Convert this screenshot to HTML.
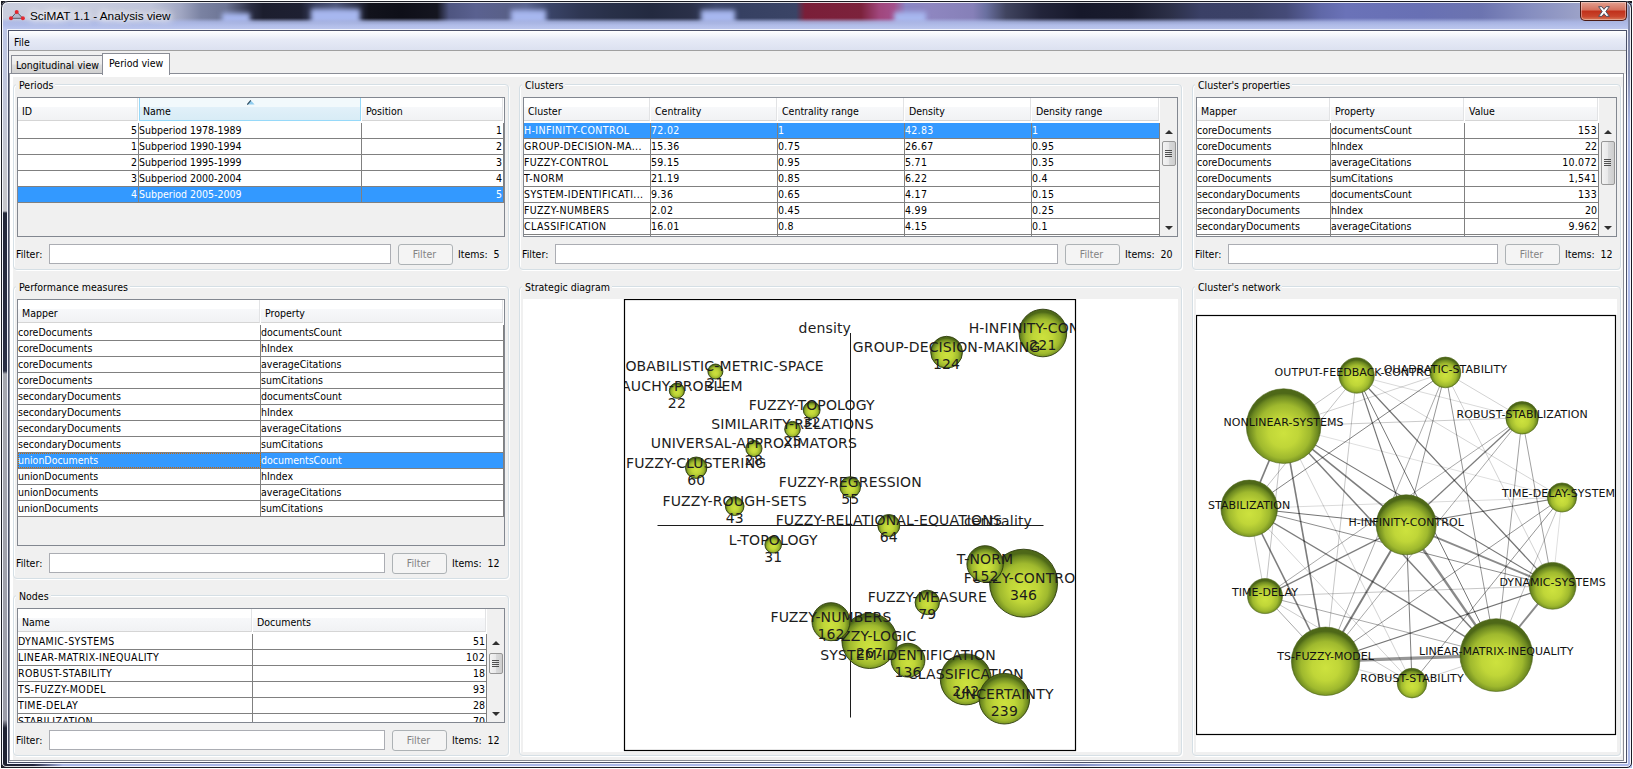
<!DOCTYPE html>
<html lang="en"><head><meta charset="utf-8"><title>SciMAT 1.1 - Analysis view</title>
<style>
html,body{margin:0;padding:0}
body{width:1633px;height:769px;position:relative;overflow:hidden;background:#fff;
 font-family:"DejaVu Sans Condensed","Liberation Sans",sans-serif;font-size:10.5px;color:#000;cursor:default}
div,span{box-sizing:border-box}
.a{position:absolute}
.t{position:absolute;white-space:nowrap;line-height:14px;height:14px}
#client{background:#f0f0f0;overflow:hidden}
#menubar{background:linear-gradient(#fff 0,#f4f6fb 4px,#e6eaf6 9px,#dce1f0 100%);border-bottom:1px solid #a0a0a0}
.tab{position:absolute;border:1px solid #898c95;border-bottom:0;white-space:nowrap;line-height:14px}
.tab.off{background:linear-gradient(#f2f2f2 0,#ebebeb 8px,#dddddd 9px,#cfcfcf 100%)}
.tab.on{background:#fff}
#tabc{border:1px solid #898c95;background:#f0f0f0}
.grp{position:absolute;border:1px solid #d5dfe5;border-radius:4px;box-shadow:1px 1px 0 #fff,inset 1px 1px 0 #fff}
.gt{position:absolute;top:-7px;left:2px;height:14px;line-height:14px;padding:0 2px 0 3px;background:#f0f0f0;white-space:nowrap}
.tbl{position:absolute;border:1px solid #828790;background:#f0f0f0;overflow:hidden}
.hd{position:absolute;left:0;top:0;height:25px;background:#fff}
.hc{position:absolute;top:0;height:23px;border-right:1px solid #e2e3e5;border-bottom:1px solid #d5d5d5;
 background:linear-gradient(#fff 0,#fff 9px,#f7f8fa 9px,#f1f2f4 22px);line-height:14px;padding:6px 0 0 4px;white-space:nowrap;overflow:hidden}
.hc.s{border:1px solid #96d9f9;border-top:0;background:linear-gradient(#f2f9fc 0,#f2f9fc 9px,#e1f0f9 9px,#d8ecf6 22px);padding-left:3px}
.rw{position:absolute;left:0;height:16px;background:#fff;border-bottom:1px solid #808080;overflow:hidden}
.rw.sel{background:#3399ff;color:#fff}
.c{position:absolute;top:0;height:15px;line-height:15px;border-right:1px solid #808080;white-space:nowrap;overflow:hidden;padding:0 1px 0 0}
.c.r{text-align:right}
.c.u{letter-spacing:.4px}
.c.n{letter-spacing:.3px}
.tf{position:absolute;height:20px;background:#fff;border:1px solid #abadb3}
.btn{position:absolute;width:55px;height:21px;border:1px solid #adb2b5;border-radius:3px;background:#f4f4f4;color:#838383;text-align:center;line-height:18px;padding-right:2px}
.sb{position:absolute;background:#f0f0f0;width:17px}
.th{position:absolute;left:2px;width:14px;border:1px solid #979797;border-radius:2px;background:linear-gradient(90deg,#f3f3f3 0,#e8e8e9 49%,#d9dadb 50%,#cecece 100%)}
.gr{position:absolute;left:2px;width:7px;height:7px;background:repeating-linear-gradient(#4f4f4f 0,#4f4f4f 1px,transparent 1px,transparent 2px)}
.ar{position:absolute;left:5px;width:0;height:0;border-left:4px solid transparent;border-right:4px solid transparent}
.ar.u{border-bottom:4px solid #303030}
.ar.d{border-top:4px solid #303030}
svg text{font-family:"DejaVu Sans","Liberation Sans",sans-serif}
</style></head>
<body>
<div class="a" id="frame" style="left:1px;top:1px;width:1631px;height:767px;background:#17181e"></div>
<div class="a" id="glass" style="left:1px;top:1px;width:1631px;height:767px;background:#adbbeb;border-radius:7px 7px 6px 6px"></div>
<div class="a" id="titlebar" style="left:1px;top:1px;width:1631px;height:29px;border-radius:7px 7px 0 0;overflow:hidden;background:linear-gradient(90deg,#c9cddd 0px,#ccd0e0 60px,#bfc4da 150px,#a0a6c2 180px,#7a82a2 200px,#6c7494 225px,#2a2d42 250px,#1c1e2e 262px,#1e2032 300px,#3a4060 315px,#4a5276 335px,#2c3048 355px,#12131c 368px,#0e0f18 400px,#14151f 436px,#4e5580 448px,#5a6190 475px,#596088 505px,#5a6490 525px,#3a4468 548px,#2e3652 580px,#283048 610px,#232a40 650px,#2a3048 690px,#3a4468 715px,#364062 740px,#3a4466 795px,#7a1e38 804px,#7c223c 860px,#a0467c 878px,#a4508c 893px,#8a86c4 905px,#8e86c0 930px,#8680b8 972px,#6a70a0 985px,#40445f 1005px,#22243a 1040px,#16182a 1080px,#1a1c2e 1130px,#2c3048 1170px,#3a4066 1200px,#3c4268 1250px,#454b78 1285px,#6068a8 1320px,#6a72b8 1345px,#6870b4 1420px,#6c74b0 1480px,#868ec0 1530px,#9ca2c8 1580px,#a8aed0 1633px)"><div class="a" style="left:221px;top:12px;width:28px;height:11px;background:#a7b7ef;filter:blur(2.5px)"></div><div class="a" style="left:310px;top:8px;width:49px;height:15px;background:#a7b7ef;filter:blur(2.5px)"></div><div class="a" style="left:510px;top:9px;width:35px;height:14px;background:#a7b7ef;filter:blur(2.5px)"></div><div class="a" style="left:700px;top:9px;width:34px;height:14px;background:#a7b7ef;filter:blur(2.5px)"></div><div class="a" style="left:893px;top:11px;width:32px;height:12px;background:#a7b7ef;filter:blur(2.5px)"></div><div class="a" style="left:0;top:0;width:1631px;height:29px;background:linear-gradient(rgba(185,195,232,0) 0,rgba(185,195,232,0) 17px,rgba(172,184,230,.85) 21px,rgba(176,188,232,1) 24px,rgba(190,200,238,1) 100%)"></div></div>
<div class="a" style="left:3px;top:30px;width:4px;height:734px;background:linear-gradient(#bcc5e4 0,#c5c6cc 150px,#c5c6cc 181px,#23283a 183px,#2a2f44 341px,#a6a8b0 344px,#9a9ca8 690px,#1e2232 698px,#1e2232 100%)"></div>
<div class="a" style="left:1628px;top:30px;width:4px;height:734px;background:#acb9e8"></div>
<div class="a" style="left:3px;top:764px;width:1629px;height:4px;background:linear-gradient(90deg,#1e2232 0,#20243a 30px,#a9b6e6 60px,#adbaea 1000px,#7f8cc0 1075px,#98a6d8 1100px,#adbaea 1200px,#aebbeb 100%)"></div>
<div class="a" style="left:1628px;top:3px;width:4px;height:120px;background:linear-gradient(#7c84a4 0,#8890b0 70px,rgba(136,144,176,0) 100%)"></div>
<div class="a" style="left:1px;top:1px;width:1631px;height:767px;border:1px solid #1a1c24;border-radius:7px 7px 5px 5px;box-shadow:inset 0 0 0 1px rgba(255,255,255,.85)"></div>
<div class="a" style="left:7px;top:29px;width:1621px;height:735px;border:1px solid rgba(255,255,255,.8)"></div>
<div class="a" style="left:8px;top:30px;width:1619px;height:733px;border:1px solid #4a5068"></div>
<svg class="a" style="left:8px;top:9px" width="18" height="14" viewBox="0 0 18 14"><path d="M8.7 2.9 L3 9.3 L14.9 9.3 Z" fill="rgba(150,156,180,.45)" stroke="#4e4e5a" stroke-width=".9"/><circle cx="8.7" cy="2.9" r="2" fill="#e3262d"/><circle cx="3" cy="9.3" r="2" fill="#e3262d"/><circle cx="14.9" cy="9.3" r="2" fill="#e3262d"/></svg>
<div class="a" id="wtitle" style="left:30px;top:8px;height:16px;line-height:16px;font-family:'Liberation Sans',sans-serif;font-size:11.8px;white-space:nowrap;text-shadow:0 0 6px #fff,0 0 9px #fff,0 0 12px rgba(255,255,255,.9)">SciMAT 1.1 - Analysis view</div>
<div class="a" id="closebtn" style="left:1580px;top:2px;width:47px;height:19px;border:1px solid #4a1a14;border-top:0;border-radius:0 0 5px 5px;background:linear-gradient(#e3a090 0,#d4705c 45%,#c0301a 50%,#c8452c 80%,#d87a5a 100%);box-shadow:inset 0 0 0 1px rgba(255,255,255,.35)"><svg class="a" style="left:17px;top:4px" width="12" height="11" viewBox="0 0 11 10"><path d="M0.6 0.6 L3.6 0.6 L5.5 3 L7.4 0.6 L10.4 0.6 L7.2 5 L10.4 9.4 L7.4 9.4 L5.5 7 L3.6 9.4 L0.6 9.4 L3.8 5 Z" fill="#fff" stroke="#4a4f60" stroke-width="0.9" stroke-linejoin="round"/></svg></div>
<div id="client" class="a " style="left:9px;top:31px;width:1617px;height:731px;"><div id="menubar" class="a " style="left:0px;top:0px;width:1617px;height:20px;"><div class="t " style="left:5px;top:4px;">File</div></div>
<div class="a tab off" style="left:2px;top:24px;width:92px;height:19px;"><div class="t " style="left:4px;top:2px;">Longitudinal view</div></div>
<div id="tabc" class="a " style="left:0px;top:42px;width:1615px;height:688px;box-shadow:inset 0 3px 0 #fff,inset 3px 0 0 #fff,2px 1px 0 #fff"><div class="a tab on" style="left:92px;top:-21px;width:68px;height:22px;z-index:3"><div class="t " style="left:6px;top:2px;">Period view</div></div>
<div class="a grp" style="left:3px;top:10px;width:496px;height:186px;"><div class="gt">Periods</div><div class="a tbl" style="left:3px;top:12px;width:488px;height:140px;"><div class="hd" style="width:486px"><div class="hc" style="left:0px;width:120px">ID</div><div class="hc s" style="left:121px;width:222px">Name<svg class="a" style="left:107px;top:2px" width="8" height="5" viewBox="0 0 8 5"><path d="M0.3 4.6 L3.8 0.4 L7.6 4.6 Z" fill="#8fcdf0"/><path d="M0.3 4.6 L3.8 0.4" fill="none" stroke="#2c4a5e" stroke-width="1.1"/></svg></div><div class="hc" style="left:344px;width:141px">Position</div></div>
<div class="rw" style="top:25px;width:486px"><div class="c r" style="left:0px;width:121px;">5</div><div class="c" style="left:121px;width:223px;">Subperiod 1978-1989</div><div class="c r" style="left:344px;width:142px;">1</div></div>
<div class="rw" style="top:41px;width:486px"><div class="c r" style="left:0px;width:121px;">1</div><div class="c" style="left:121px;width:223px;">Subperiod 1990-1994</div><div class="c r" style="left:344px;width:142px;">2</div></div>
<div class="rw" style="top:57px;width:486px"><div class="c r" style="left:0px;width:121px;">2</div><div class="c" style="left:121px;width:223px;">Subperiod 1995-1999</div><div class="c r" style="left:344px;width:142px;">3</div></div>
<div class="rw" style="top:73px;width:486px"><div class="c r" style="left:0px;width:121px;">3</div><div class="c" style="left:121px;width:223px;">Subperiod 2000-2004</div><div class="c r" style="left:344px;width:142px;">4</div></div>
<div class="rw sel" style="top:89px;width:486px"><div class="c r" style="left:0px;width:121px;">4</div><div class="c" style="left:121px;width:223px;">Subperiod 2005-2009</div><div class="c r" style="left:344px;width:142px;">5</div></div>
</div>
<div class="t " style="left:2px;top:162px;">Filter:</div><div class="a tf" style="left:35px;top:159px;width:342px;height:20px;"></div>
<div class="btn" style="left:384px;top:159px">Filter</div><div class="t " style="left:444px;top:162px;">Items:  5</div></div>
<div class="a grp" style="left:3px;top:212px;width:496px;height:293px;"><div class="gt">Performance measures</div><div class="a tbl" style="left:3px;top:12px;width:488px;height:247px;"><div class="hd" style="width:486px"><div class="hc" style="left:0px;width:242px">Mapper</div><div class="hc" style="left:243px;width:242px">Property</div></div>
<div class="rw" style="top:25px;width:486px"><div class="c" style="left:0px;width:243px;">coreDocuments</div><div class="c" style="left:243px;width:243px;">documentsCount</div></div>
<div class="rw" style="top:41px;width:486px"><div class="c" style="left:0px;width:243px;">coreDocuments</div><div class="c" style="left:243px;width:243px;">hIndex</div></div>
<div class="rw" style="top:57px;width:486px"><div class="c" style="left:0px;width:243px;">coreDocuments</div><div class="c" style="left:243px;width:243px;">averageCitations</div></div>
<div class="rw" style="top:73px;width:486px"><div class="c" style="left:0px;width:243px;">coreDocuments</div><div class="c" style="left:243px;width:243px;">sumCitations</div></div>
<div class="rw" style="top:89px;width:486px"><div class="c" style="left:0px;width:243px;">secondaryDocuments</div><div class="c" style="left:243px;width:243px;">documentsCount</div></div>
<div class="rw" style="top:105px;width:486px"><div class="c" style="left:0px;width:243px;">secondaryDocuments</div><div class="c" style="left:243px;width:243px;">hIndex</div></div>
<div class="rw" style="top:121px;width:486px"><div class="c" style="left:0px;width:243px;">secondaryDocuments</div><div class="c" style="left:243px;width:243px;">averageCitations</div></div>
<div class="rw" style="top:137px;width:486px"><div class="c" style="left:0px;width:243px;">secondaryDocuments</div><div class="c" style="left:243px;width:243px;">sumCitations</div></div>
<div class="rw sel" style="top:153px;width:486px"><div class="c" style="left:0px;width:243px;outline:1px dotted #cc6600;outline-offset:-1px;">unionDocuments</div><div class="c" style="left:243px;width:243px;">documentsCount</div></div>
<div class="rw" style="top:169px;width:486px"><div class="c" style="left:0px;width:243px;">unionDocuments</div><div class="c" style="left:243px;width:243px;">hIndex</div></div>
<div class="rw" style="top:185px;width:486px"><div class="c" style="left:0px;width:243px;">unionDocuments</div><div class="c" style="left:243px;width:243px;">averageCitations</div></div>
<div class="rw" style="top:201px;width:486px"><div class="c" style="left:0px;width:243px;">unionDocuments</div><div class="c" style="left:243px;width:243px;">sumCitations</div></div>
</div>
<div class="t " style="left:2px;top:269px;">Filter:</div><div class="a tf" style="left:35px;top:266px;width:336px;height:20px;"></div>
<div class="btn" style="left:378px;top:266px">Filter</div><div class="t " style="left:438px;top:269px;">Items:  12</div></div>
<div class="a grp" style="left:3px;top:521px;width:496px;height:161px;"><div class="gt">Nodes</div><div class="a tbl" style="left:3px;top:12px;width:488px;height:115px;"><div class="hd" style="width:469px"><div class="hc" style="left:0px;width:234px">Name</div><div class="hc" style="left:235px;width:233px">Documents</div></div>
<div class="rw" style="top:25px;width:469px"><div class="c u" style="left:0px;width:235px;">DYNAMIC-SYSTEMS</div><div class="c r" style="left:235px;width:234px;">51</div></div>
<div class="rw" style="top:41px;width:469px"><div class="c u" style="left:0px;width:235px;">LINEAR-MATRIX-INEQUALITY</div><div class="c r n" style="left:235px;width:234px;">102</div></div>
<div class="rw" style="top:57px;width:469px"><div class="c u" style="left:0px;width:235px;">ROBUST-STABILITY</div><div class="c r" style="left:235px;width:234px;">18</div></div>
<div class="rw" style="top:73px;width:469px"><div class="c u" style="left:0px;width:235px;">TS-FUZZY-MODEL</div><div class="c r" style="left:235px;width:234px;">93</div></div>
<div class="rw" style="top:89px;width:469px"><div class="c u" style="left:0px;width:235px;">TIME-DELAY</div><div class="c r" style="left:235px;width:234px;">28</div></div>
<div class="rw" style="top:105px;width:469px"><div class="c u" style="left:0px;width:235px;">STABILIZATION</div><div class="c r" style="left:235px;width:234px;">70</div></div>
<div class="a sb" style="left:469px;top:25px;width:17px;height:88px;"><div class="ar u" style="top:7px"></div><div class="ar d" style="top:78px"></div><div class="th" style="top:19px;height:21px"><div class="gr" style="top:6px"></div></div></div>
</div>
<div class="t " style="left:2px;top:137px;">Filter:</div><div class="a tf" style="left:35px;top:134px;width:336px;height:20px;"></div>
<div class="btn" style="left:378px;top:134px">Filter</div><div class="t " style="left:438px;top:137px;">Items:  12</div></div>
<div class="a grp" style="left:509px;top:10px;width:663px;height:186px;"><div class="gt">Clusters</div><div class="a tbl" style="left:3px;top:12px;width:655px;height:140px;"><div class="hd" style="width:636px"><div class="hc" style="left:0px;width:126px">Cluster</div><div class="hc" style="left:127px;width:126px">Centrality</div><div class="hc" style="left:254px;width:126px">Centrality range</div><div class="hc" style="left:381px;width:126px">Density</div><div class="hc" style="left:508px;width:127px">Density range</div></div>
<div class="rw sel" style="top:25px;width:636px"><div class="c u" style="left:0px;width:127px;">H-INFINITY-CONTROL</div><div class="c n" style="left:127px;width:127px;">72.02</div><div class="c" style="left:254px;width:127px;">1</div><div class="c n" style="left:381px;width:127px;">42.83</div><div class="c" style="left:508px;width:128px;">1</div></div>
<div class="rw" style="top:41px;width:636px"><div class="c u" style="left:0px;width:127px;">GROUP-DECISION-MA...</div><div class="c n" style="left:127px;width:127px;">15.36</div><div class="c n" style="left:254px;width:127px;">0.75</div><div class="c n" style="left:381px;width:127px;">26.67</div><div class="c n" style="left:508px;width:128px;">0.95</div></div>
<div class="rw" style="top:57px;width:636px"><div class="c u" style="left:0px;width:127px;">FUZZY-CONTROL</div><div class="c n" style="left:127px;width:127px;">59.15</div><div class="c n" style="left:254px;width:127px;">0.95</div><div class="c n" style="left:381px;width:127px;">5.71</div><div class="c n" style="left:508px;width:128px;">0.35</div></div>
<div class="rw" style="top:73px;width:636px"><div class="c u" style="left:0px;width:127px;">T-NORM</div><div class="c n" style="left:127px;width:127px;">21.19</div><div class="c n" style="left:254px;width:127px;">0.85</div><div class="c n" style="left:381px;width:127px;">6.22</div><div class="c n" style="left:508px;width:128px;">0.4</div></div>
<div class="rw" style="top:89px;width:636px"><div class="c u" style="left:0px;width:127px;">SYSTEM-IDENTIFICATI...</div><div class="c n" style="left:127px;width:127px;">9.36</div><div class="c n" style="left:254px;width:127px;">0.65</div><div class="c n" style="left:381px;width:127px;">4.17</div><div class="c n" style="left:508px;width:128px;">0.15</div></div>
<div class="rw" style="top:105px;width:636px"><div class="c u" style="left:0px;width:127px;">FUZZY-NUMBERS</div><div class="c n" style="left:127px;width:127px;">2.02</div><div class="c n" style="left:254px;width:127px;">0.45</div><div class="c n" style="left:381px;width:127px;">4.99</div><div class="c n" style="left:508px;width:128px;">0.25</div></div>
<div class="rw" style="top:121px;width:636px"><div class="c u" style="left:0px;width:127px;">CLASSIFICATION</div><div class="c n" style="left:127px;width:127px;">16.01</div><div class="c n" style="left:254px;width:127px;">0.8</div><div class="c n" style="left:381px;width:127px;">4.15</div><div class="c n" style="left:508px;width:128px;">0.1</div></div>
<div class="rw" style="top:137px;width:636px"><div class="c u" style="left:0px;width:127px;">UNCERTAINTY</div><div class="c n" style="left:127px;width:127px;">19.77</div><div class="c n" style="left:254px;width:127px;">0.9</div><div class="c n" style="left:381px;width:127px;">3.8</div><div class="c n" style="left:508px;width:128px;">0.05</div></div>
<div class="a sb" style="left:636px;top:25px;width:17px;height:113px;"><div class="ar u" style="top:7px"></div><div class="ar d" style="top:103px"></div><div class="th" style="top:18px;height:25px"><div class="gr" style="top:8px"></div></div></div>
</div>
<div class="t " style="left:2px;top:162px;">Filter:</div><div class="a tf" style="left:35px;top:159px;width:503px;height:20px;"></div>
<div class="btn" style="left:545px;top:159px">Filter</div><div class="t " style="left:605px;top:162px;">Items:  20</div></div>
<div class="a grp" style="left:1182px;top:10px;width:429px;height:186px;"><div class="gt">Cluster's properties</div><div class="a tbl" style="left:3px;top:12px;width:421px;height:140px;"><div class="hd" style="width:402px"><div class="hc" style="left:0px;width:133px">Mapper</div><div class="hc" style="left:134px;width:133px">Property</div><div class="hc" style="left:268px;width:133px">Value</div></div>
<div class="rw" style="top:25px;width:402px"><div class="c" style="left:0px;width:134px;">coreDocuments</div><div class="c" style="left:134px;width:134px;">documentsCount</div><div class="c r n" style="left:268px;width:134px;">153</div></div>
<div class="rw" style="top:41px;width:402px"><div class="c" style="left:0px;width:134px;">coreDocuments</div><div class="c" style="left:134px;width:134px;">hIndex</div><div class="c r" style="left:268px;width:134px;">22</div></div>
<div class="rw" style="top:57px;width:402px"><div class="c" style="left:0px;width:134px;">coreDocuments</div><div class="c" style="left:134px;width:134px;">averageCitations</div><div class="c r n" style="left:268px;width:134px;">10.072</div></div>
<div class="rw" style="top:73px;width:402px"><div class="c" style="left:0px;width:134px;">coreDocuments</div><div class="c" style="left:134px;width:134px;">sumCitations</div><div class="c r n" style="left:268px;width:134px;">1,541</div></div>
<div class="rw" style="top:89px;width:402px"><div class="c" style="left:0px;width:134px;">secondaryDocuments</div><div class="c" style="left:134px;width:134px;">documentsCount</div><div class="c r n" style="left:268px;width:134px;">133</div></div>
<div class="rw" style="top:105px;width:402px"><div class="c" style="left:0px;width:134px;">secondaryDocuments</div><div class="c" style="left:134px;width:134px;">hIndex</div><div class="c r" style="left:268px;width:134px;">20</div></div>
<div class="rw" style="top:121px;width:402px"><div class="c" style="left:0px;width:134px;">secondaryDocuments</div><div class="c" style="left:134px;width:134px;">averageCitations</div><div class="c r n" style="left:268px;width:134px;">9.962</div></div>
<div class="rw" style="top:137px;width:402px"><div class="c" style="left:0px;width:134px;">secondaryDocuments</div><div class="c" style="left:134px;width:134px;">sumCitations</div><div class="c r n" style="left:268px;width:134px;">1,325</div></div>
<div class="a sb" style="left:402px;top:25px;width:17px;height:113px;"><div class="ar u" style="top:7px"></div><div class="ar d" style="top:103px"></div><div class="th" style="top:18px;height:44px"><div class="gr" style="top:17px"></div></div></div>
</div>
<div class="t " style="left:2px;top:162px;">Filter:</div><div class="a tf" style="left:35px;top:159px;width:270px;height:20px;"></div>
<div class="btn" style="left:312px;top:159px">Filter</div><div class="t " style="left:372px;top:162px;">Items:  12</div></div>
<div class="a grp" style="left:509px;top:212px;width:663px;height:470px;"><div class="gt">Strategic diagram</div><div class="a " style="left:3px;top:12px;width:655px;height:453px;background:#fff"><svg class="a" style="left:0;top:0" width="655" height="453" viewBox="523 299 655 453">
<defs><radialGradient id="sg" cx="50%" cy="56%" r="50%" fx="50%" fy="60%"><stop offset="0" stop-color="#cde23e"/><stop offset=".4" stop-color="#c0d638"/><stop offset=".72" stop-color="#9fb92e"/><stop offset=".92" stop-color="#6c8820"/><stop offset="1" stop-color="#4e6818"/></radialGradient><clipPath id="cb"><rect x="625" y="300" width="450" height="450"/></clipPath></defs>
<rect x="624.5" y="299.5" width="451" height="451" fill="#fff" stroke="#000" stroke-width="1.2"/>
<g clip-path="url(#cb)" font-size="14" letter-spacing=".15" fill="#1c1c1c" text-anchor="middle">
<path d="M850.5 333 V717.5 M657.5 525.5 H1043.5" stroke="#1c1c1c" stroke-width="1" fill="none"/>
<text x="851" y="333" text-anchor="end">density</text><text x="1032" y="526" text-anchor="end">centrality</text>
<g><circle cx="1023.6" cy="583.2" r="34.0" fill="url(#sg)" stroke="#2e3c0c" stroke-width=".9"/><text x="1023.6" y="583.0">FUZZY-CONTROL</text><text x="1023.6" y="600.0">346</text></g>
<g><circle cx="869.5" cy="640.9" r="27.6" fill="url(#sg)" stroke="#2e3c0c" stroke-width=".9"/><text x="869.5" y="640.7">FUZZY-LOGIC</text><text x="869.5" y="657.7">267</text></g>
<g><circle cx="965.8" cy="679.4" r="25.5" fill="url(#sg)" stroke="#2e3c0c" stroke-width=".9"/><text x="965.8" y="679.2">CLASSIFICATION</text><text x="965.8" y="696.2">242</text></g>
<g><circle cx="1004.4" cy="698.7" r="25.3" fill="url(#sg)" stroke="#2e3c0c" stroke-width=".9"/><text x="1004.4" y="698.5">UNCERTAINTY</text><text x="1004.4" y="715.5">239</text></g>
<g><circle cx="1042.9" cy="333.0" r="23.8" fill="url(#sg)" stroke="#2e3c0c" stroke-width=".9"/><text x="1042.9" y="332.8">H-INFINITY-CONTROL</text><text x="1042.9" y="349.8">221</text></g>
<g><circle cx="831.0" cy="621.7" r="19.0" fill="url(#sg)" stroke="#2e3c0c" stroke-width=".9"/><text x="831.0" y="621.5">FUZZY-NUMBERS</text><text x="831.0" y="638.5">162</text></g>
<g><circle cx="985.1" cy="563.9" r="18.2" fill="url(#sg)" stroke="#2e3c0c" stroke-width=".9"/><text x="985.1" y="563.7">T-NORM</text><text x="985.1" y="580.7">152</text></g>
<g><circle cx="908.0" cy="660.2" r="16.9" fill="url(#sg)" stroke="#2e3c0c" stroke-width=".9"/><text x="908.0" y="660.0">SYSTEM-IDENTIFICATION</text><text x="908.0" y="677.0">136</text></g>
<g><circle cx="946.6" cy="352.2" r="15.9" fill="url(#sg)" stroke="#2e3c0c" stroke-width=".9"/><text x="946.6" y="352.0">GROUP-DECISION-MAKING</text><text x="946.6" y="369.0">124</text></g>
<g><circle cx="927.3" cy="602.4" r="12.2" fill="url(#sg)" stroke="#2e3c0c" stroke-width=".9"/><text x="927.3" y="602.2">FUZZY-MEASURE</text><text x="927.3" y="619.2">79</text></g>
<g><circle cx="888.8" cy="525.5" r="11.0" fill="url(#sg)" stroke="#2e3c0c" stroke-width=".9"/><text x="888.8" y="525.2">FUZZY-RELATIONAL-EQUATIONS</text><text x="888.8" y="542.2">64</text></g>
<g><circle cx="696.2" cy="467.7" r="10.7" fill="url(#sg)" stroke="#2e3c0c" stroke-width=".9"/><text x="696.2" y="467.5">FUZZY-CLUSTERING</text><text x="696.2" y="484.5">60</text></g>
<g><circle cx="850.3" cy="487.0" r="10.3" fill="url(#sg)" stroke="#2e3c0c" stroke-width=".9"/><text x="850.3" y="486.8">FUZZY-REGRESSION</text><text x="850.3" y="503.8">55</text></g>
<g><circle cx="734.7" cy="506.2" r="9.3" fill="url(#sg)" stroke="#2e3c0c" stroke-width=".9"/><text x="734.7" y="506.0">FUZZY-ROUGH-SETS</text><text x="734.7" y="523.0">43</text></g>
<g><circle cx="811.7" cy="410.0" r="8.4" fill="url(#sg)" stroke="#2e3c0c" stroke-width=".9"/><text x="811.7" y="409.8">FUZZY-TOPOLOGY</text><text x="811.7" y="426.8">32</text></g>
<g><circle cx="773.2" cy="544.7" r="8.3" fill="url(#sg)" stroke="#2e3c0c" stroke-width=".9"/><text x="773.2" y="544.5">L-TOPOLOGY</text><text x="773.2" y="561.5">31</text></g>
<g><circle cx="753.9" cy="448.5" r="8.1" fill="url(#sg)" stroke="#2e3c0c" stroke-width=".9"/><text x="753.9" y="448.3">UNIVERSAL-APPROXIMATORS</text><text x="753.9" y="465.3">28</text></g>
<g><circle cx="792.5" cy="429.2" r="7.8" fill="url(#sg)" stroke="#2e3c0c" stroke-width=".9"/><text x="792.5" y="429.0">SIMILARITY-RELATIONS</text><text x="792.5" y="446.0">25</text></g>
<g><circle cx="676.9" cy="390.7" r="7.6" fill="url(#sg)" stroke="#2e3c0c" stroke-width=".9"/><text x="676.9" y="390.5">CAUCHY-PROBLEM</text><text x="676.9" y="407.5">22</text></g>
<g><circle cx="715.4" cy="371.5" r="7.5" fill="url(#sg)" stroke="#2e3c0c" stroke-width=".9"/><text x="715.4" y="371.3">PROBABILISTIC-METRIC-SPACE</text><text x="715.4" y="388.3">21</text></g>
</g></svg>
</div>
</div>
<div class="a grp" style="left:1182px;top:212px;width:429px;height:470px;"><div class="gt">Cluster's network</div><div class="a " style="left:3px;top:12px;width:421px;height:453px;background:#fff"><svg class="a" style="left:0;top:0" width="421" height="453" viewBox="1196 299 421 453">
<defs><radialGradient id="ng" cx="50%" cy="56%" r="50%" fx="50%" fy="60%"><stop offset="0" stop-color="#cde23e"/><stop offset=".4" stop-color="#c0d638"/><stop offset=".72" stop-color="#9fb92e"/><stop offset=".92" stop-color="#6c8820"/><stop offset="1" stop-color="#4e6818"/></radialGradient><clipPath id="nb"><rect x="1197" y="316" width="418" height="418"/></clipPath></defs>
<rect x="1196.5" y="315.5" width="419" height="419" fill="#fff" stroke="#000" stroke-width="1.2"/>
<g clip-path="url(#nb)">
<g stroke="#000" fill="none" stroke-linecap="butt">
<line x1="1325.6" y1="661.3" x2="1496.3" y2="655.1" stroke-width="3.28" stroke-opacity="0.41"/>
<line x1="1406.2" y1="524.8" x2="1496.3" y2="655.1" stroke-width="2.46" stroke-opacity="0.46"/>
<line x1="1406.2" y1="524.8" x2="1552.6" y2="585.8" stroke-width="1.97" stroke-opacity="0.46"/>
<line x1="1552.6" y1="585.8" x2="1496.3" y2="655.1" stroke-width="1.97" stroke-opacity="0.46"/>
<line x1="1406.2" y1="524.8" x2="1325.6" y2="661.3" stroke-width="1.97" stroke-opacity="0.51"/>
<line x1="1522.1" y1="417.8" x2="1406.2" y2="524.8" stroke-width="1.31" stroke-opacity="0.51"/>
<line x1="1283.6" y1="426.1" x2="1249.2" y2="508.4" stroke-width="1.64" stroke-opacity="0.51"/>
<line x1="1283.6" y1="426.1" x2="1325.6" y2="661.3" stroke-width="1.64" stroke-opacity="0.51"/>
<line x1="1283.6" y1="426.1" x2="1496.3" y2="655.1" stroke-width="1.48" stroke-opacity="0.51"/>
<line x1="1283.6" y1="426.1" x2="1406.2" y2="524.8" stroke-width="1.64" stroke-opacity="0.51"/>
<line x1="1249.2" y1="508.4" x2="1325.6" y2="661.3" stroke-width="1.64" stroke-opacity="0.51"/>
<line x1="1249.2" y1="508.4" x2="1496.3" y2="655.1" stroke-width="1.48" stroke-opacity="0.51"/>
<line x1="1283.6" y1="426.1" x2="1552.6" y2="585.8" stroke-width="1.07" stroke-opacity="0.55"/>
<line x1="1356.6" y1="375.5" x2="1406.2" y2="524.8" stroke-width="1.15" stroke-opacity="0.55"/>
<line x1="1356.6" y1="375.5" x2="1496.3" y2="655.1" stroke-width="0.98" stroke-opacity="0.55"/>
<line x1="1356.6" y1="375.5" x2="1552.6" y2="585.8" stroke-width="1.23" stroke-opacity="0.55"/>
<line x1="1406.2" y1="524.8" x2="1265.0" y2="596.1" stroke-width="1.31" stroke-opacity="0.51"/>
<line x1="1552.6" y1="585.8" x2="1325.6" y2="661.3" stroke-width="1.15" stroke-opacity="0.55"/>
<line x1="1249.2" y1="508.4" x2="1406.2" y2="524.8" stroke-width="1.07" stroke-opacity="0.55"/>
<line x1="1445.4" y1="372.4" x2="1249.2" y2="508.4" stroke-width="0.98" stroke-opacity="0.51"/>
<line x1="1562.0" y1="497.5" x2="1406.2" y2="524.8" stroke-width="1.07" stroke-opacity="0.51"/>
<line x1="1249.2" y1="508.4" x2="1552.6" y2="585.8" stroke-width="0.82" stroke-opacity="0.55"/>
<line x1="1445.4" y1="372.4" x2="1406.2" y2="524.8" stroke-width="0.82" stroke-opacity="0.51"/>
<line x1="1445.4" y1="372.4" x2="1496.3" y2="655.1" stroke-width="0.82" stroke-opacity="0.51"/>
<line x1="1445.4" y1="372.4" x2="1325.6" y2="661.3" stroke-width="0.74" stroke-opacity="0.46"/>
<line x1="1522.1" y1="417.8" x2="1496.3" y2="655.1" stroke-width="0.82" stroke-opacity="0.46"/>
<line x1="1522.1" y1="417.8" x2="1552.6" y2="585.8" stroke-width="0.82" stroke-opacity="0.46"/>
<line x1="1522.1" y1="417.8" x2="1325.6" y2="661.3" stroke-width="0.74" stroke-opacity="0.46"/>
<line x1="1522.1" y1="417.8" x2="1265.0" y2="596.1" stroke-width="0.74" stroke-opacity="0.46"/>
<line x1="1562.0" y1="497.5" x2="1325.6" y2="661.3" stroke-width="0.82" stroke-opacity="0.51"/>
<line x1="1562.0" y1="497.5" x2="1412.0" y2="683.1" stroke-width="0.82" stroke-opacity="0.51"/>
<line x1="1265.0" y1="596.1" x2="1496.3" y2="655.1" stroke-width="0.74" stroke-opacity="0.46"/>
<line x1="1406.2" y1="524.8" x2="1412.0" y2="683.1" stroke-width="0.98" stroke-opacity="0.51"/>
<line x1="1265.0" y1="596.1" x2="1325.6" y2="661.3" stroke-width="0.74" stroke-opacity="0.46"/>
<line x1="1356.6" y1="375.5" x2="1325.6" y2="661.3" stroke-width="0.82" stroke-opacity="0.28"/>
<line x1="1356.6" y1="375.5" x2="1283.6" y2="426.1" stroke-width="0.66" stroke-opacity="0.37"/>
<line x1="1356.6" y1="375.5" x2="1249.2" y2="508.4" stroke-width="0.66" stroke-opacity="0.37"/>
<line x1="1356.6" y1="375.5" x2="1562.0" y2="497.5" stroke-width="0.66" stroke-opacity="0.26"/>
<line x1="1356.6" y1="375.5" x2="1522.1" y2="417.8" stroke-width="0.66" stroke-opacity="0.23"/>
<line x1="1445.4" y1="372.4" x2="1283.6" y2="426.1" stroke-width="0.66" stroke-opacity="0.28"/>
<line x1="1445.4" y1="372.4" x2="1552.6" y2="585.8" stroke-width="0.66" stroke-opacity="0.28"/>
<line x1="1445.4" y1="372.4" x2="1522.1" y2="417.8" stroke-width="0.66" stroke-opacity="0.28"/>
<line x1="1283.6" y1="426.1" x2="1522.1" y2="417.8" stroke-width="0.82" stroke-opacity="0.26"/>
<line x1="1283.6" y1="426.1" x2="1562.0" y2="497.5" stroke-width="0.66" stroke-opacity="0.20"/>
<line x1="1249.2" y1="508.4" x2="1562.0" y2="497.5" stroke-width="0.74" stroke-opacity="0.20"/>
<line x1="1562.0" y1="497.5" x2="1496.3" y2="655.1" stroke-width="0.66" stroke-opacity="0.37"/>
<line x1="1562.0" y1="497.5" x2="1552.6" y2="585.8" stroke-width="0.57" stroke-opacity="0.23"/>
<line x1="1552.6" y1="585.8" x2="1265.0" y2="596.1" stroke-width="0.82" stroke-opacity="0.28"/>
<line x1="1249.2" y1="508.4" x2="1265.0" y2="596.1" stroke-width="0.66" stroke-opacity="0.32"/>
<line x1="1283.6" y1="426.1" x2="1265.0" y2="596.1" stroke-width="0.66" stroke-opacity="0.37"/>
<line x1="1265.0" y1="596.1" x2="1412.0" y2="683.1" stroke-width="0.66" stroke-opacity="0.32"/>
<line x1="1249.2" y1="508.4" x2="1412.0" y2="683.1" stroke-width="0.66" stroke-opacity="0.28"/>
<line x1="1283.6" y1="426.1" x2="1412.0" y2="683.1" stroke-width="0.66" stroke-opacity="0.28"/>
<line x1="1325.6" y1="661.3" x2="1412.0" y2="683.1" stroke-width="0.66" stroke-opacity="0.28"/>
<line x1="1496.3" y1="655.1" x2="1412.0" y2="683.1" stroke-width="0.66" stroke-opacity="0.28"/>
</g>
<g font-size="11" letter-spacing=".05" fill="#111" text-anchor="middle">
<g><circle cx="1283.6" cy="426.1" r="37.3" fill="url(#ng)" stroke="#4a6216" stroke-width=".6"/><text x="1283.6" y="425.8">NONLINEAR-SYSTEMS</text></g>
<g><circle cx="1496.3" cy="655.1" r="36.4" fill="url(#ng)" stroke="#4a6216" stroke-width=".6"/><text x="1496.3" y="654.6">LINEAR-MATRIX-INEQUALITY</text></g>
<g><circle cx="1325.6" cy="661.3" r="34.2" fill="url(#ng)" stroke="#4a6216" stroke-width=".6"/><text x="1325.6" y="660.4">TS-FUZZY-MODEL</text></g>
<g><circle cx="1406.2" cy="524.8" r="30.0" fill="url(#ng)" stroke="#4a6216" stroke-width=".6"/><text x="1406.2" y="525.8">H-INFINITY-CONTROL</text></g>
<g><circle cx="1249.2" cy="508.4" r="28.3" fill="url(#ng)" stroke="#4a6216" stroke-width=".6"/><text x="1249.2" y="508.7">STABILIZATION</text></g>
<g><circle cx="1552.6" cy="585.8" r="23.4" fill="url(#ng)" stroke="#4a6216" stroke-width=".6"/><text x="1552.6" y="585.5">DYNAMIC-SYSTEMS</text></g>
<g><circle cx="1356.6" cy="375.5" r="17.7" fill="url(#ng)" stroke="#4a6216" stroke-width=".6"/><text x="1356.6" y="376.0">OUTPUT-FEEDBACK-CONTROL</text></g>
<g><circle cx="1265.0" cy="596.1" r="17.5" fill="url(#ng)" stroke="#4a6216" stroke-width=".6"/><text x="1265.0" y="595.8">TIME-DELAY</text></g>
<g><circle cx="1522.1" cy="417.8" r="16.3" fill="url(#ng)" stroke="#4a6216" stroke-width=".6"/><text x="1522.1" y="417.6">ROBUST-STABILIZATION</text></g>
<g><circle cx="1445.4" cy="372.4" r="15.4" fill="url(#ng)" stroke="#4a6216" stroke-width=".6"/><text x="1445.4" y="373.1">QUADRATIC-STABILITY</text></g>
<g><circle cx="1412.0" cy="683.1" r="14.8" fill="url(#ng)" stroke="#4a6216" stroke-width=".6"/><text x="1412.0" y="682.4">ROBUST-STABILITY</text></g>
<g><circle cx="1562.0" cy="497.5" r="14.6" fill="url(#ng)" stroke="#4a6216" stroke-width=".6"/><text x="1562.0" y="496.5">TIME-DELAY-SYSTEMS</text></g>
</g></g></svg>
</div>
</div>
</div>
</div>
</body></html>
